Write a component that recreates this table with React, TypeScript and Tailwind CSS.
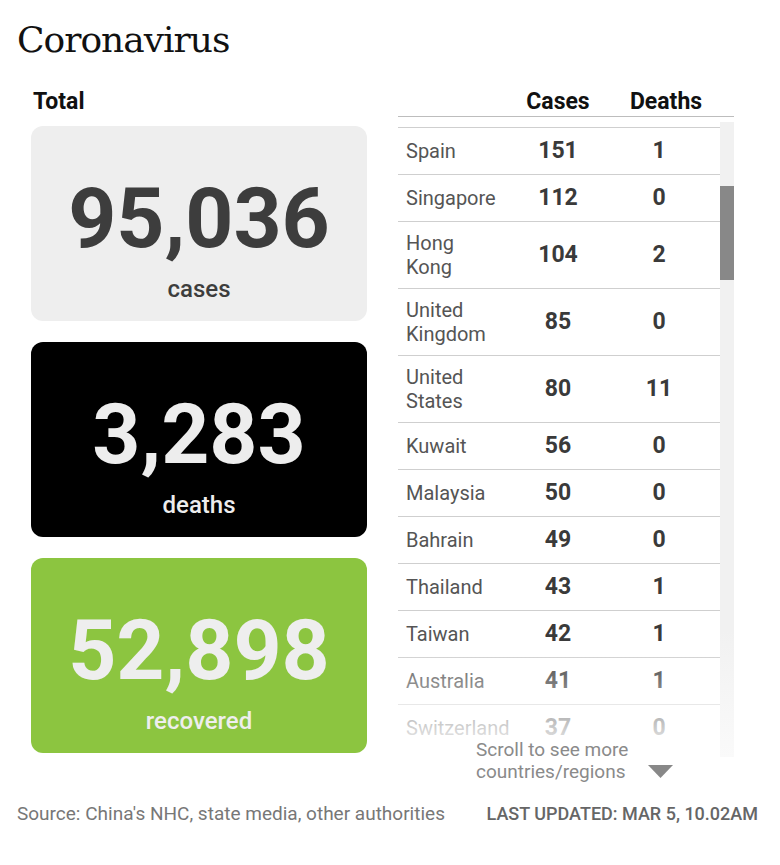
import React from 'react';

type Row = { country: string; cases: number; deaths: number };

const rows: Row[] = [
  { country: 'Spain', cases: 151, deaths: 1 },
  { country: 'Singapore', cases: 112, deaths: 0 },
  { country: 'Hong Kong', cases: 104, deaths: 2 },
  { country: 'United Kingdom', cases: 85, deaths: 0 },
  { country: 'United States', cases: 80, deaths: 11 },
  { country: 'Kuwait', cases: 56, deaths: 0 },
  { country: 'Malaysia', cases: 50, deaths: 0 },
  { country: 'Bahrain', cases: 49, deaths: 0 },
  { country: 'Thailand', cases: 43, deaths: 1 },
  { country: 'Taiwan', cases: 42, deaths: 1 },
  { country: 'Australia', cases: 41, deaths: 1 },
  { country: 'Switzerland', cases: 37, deaths: 0 },
];

const StatCard = ({ value, label, className }: { value: string; label: string; className: string }) => (
  <div className={`h-[195px] rounded-[12px] flex flex-col items-center pt-[51px] ${className}`}>
    <div className="text-[84px] leading-[84px] font-bold">{value}</div>
    <div className="mt-[14px] text-[24px] leading-[28px] font-medium">{label}</div>
  </div>
);

export default function App() {
  return (
    <div className="w-[780px] h-[865px] bg-white font-['Roboto',sans-serif] overflow-hidden">
      <h1 className="pl-[17px] pt-[18px] text-[36px] leading-[44px] tracking-[-1px] text-[#111] font-['DejaVu_Serif',serif]">
        Coronavirus
      </h1>

      <div className="flex pl-[31px] gap-[31px] mt-[26px]">
        {/* totals */}
        <div className="w-[336px]">
          <div className="pl-[2px] text-[23px] leading-[28px] font-bold text-[#111]">Total</div>
          <div className="mt-[10px] flex flex-col gap-[21px]">
            <StatCard value="95,036" label="cases" className="bg-[#eeeeee] text-[#3d3d3d]" />
            <StatCard value="3,283" label="deaths" className="bg-black text-[#ededed]" />
            <StatCard value="52,898" label="recovered" className="bg-[#8cc540] text-[#eeeeee]" />
          </div>
        </div>

        {/* table */}
        <div className="w-[336px]">
          <div className="flex border-b border-[#bdbdbd] text-[23px] leading-[28px] font-bold text-[#111]">
            <div className="w-[103px]" />
            <div className="w-[114px] text-center">Cases</div>
            <div className="w-[102px] text-center">Deaths</div>
          </div>

          <div className="mt-[5px] flex h-[635px]">
            <div className="relative w-[322px] overflow-hidden pt-[5px]">
              {rows.map((r) => (
                <div
                  key={r.country}
                  className="grid grid-cols-[103px_114px_88px] items-center border-t border-[#cfcfcf] py-[9px]"
                >
                  <div className="pl-[8px] text-[20px] leading-[24px] text-[#555]">{r.country}</div>
                  <div className="text-center text-[23px] leading-[28px] font-bold text-[#3a3a3a]">{r.cases}</div>
                  <div className="text-center text-[23px] leading-[28px] font-bold text-[#3a3a3a]">{r.deaths}</div>
                </div>
              ))}
              <div className="absolute inset-x-0 bottom-0 h-[110px] bg-linear-to-b from-white/0 to-white" />
            </div>
            <div className="w-[14px] bg-linear-to-b from-[#f1f1f1] from-80% to-[#fafafa] flex flex-col">
              <div className="h-[64px]" />
              <div className="h-[94px] bg-[#888]" />
            </div>
          </div>

          <div className="relative z-10 -mt-[18px] flex pl-[78px]">
            <div className="text-[19px] leading-[22px] text-[#8a8a8a]">
              Scroll to see more
              <br />
              countries/regions
            </div>
            <svg width="25" height="13" viewBox="0 0 25 13" className="self-end mb-[5px] ml-[20px]">
              <polygon points="0,0 25,0 12.5,13" fill="#888" />
            </svg>
          </div>
        </div>
      </div>

      <div className="mt-[19px] flex items-baseline justify-between pl-[17px] pr-[22px]">
        <div className="text-[19px] leading-[24px] text-[#777]">Source: China's NHC, state media, other authorities</div>
        <div className="text-[18px] leading-[24px] font-medium text-[#666]">LAST UPDATED: MAR 5, 10.02AM</div>
      </div>
    </div>
  );
}
